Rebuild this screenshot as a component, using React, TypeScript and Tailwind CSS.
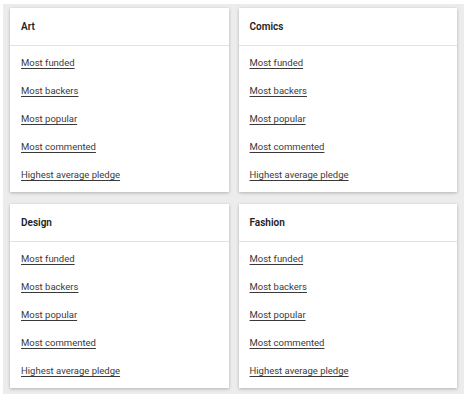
const categories = ['Art', 'Comics', 'Design', 'Fashion'];
const links = ['Most funded', 'Most backers', 'Most popular', 'Most commented', 'Highest average pledge'];

function CategoryCard({ title }: { title: string }) {
  return (
    <div className="bg-white shadow-[0_1px_3px_rgba(0,0,0,0.25)]">
      <div className="h-[38px] flex items-center px-[11px] border-b border-[#e3e3e3]">
        <h2 className="text-[10px] font-semibold text-[#222]">{title}</h2>
      </div>
      <ul className="py-[3px]">
        {links.map((l) => (
          <li key={l} className="h-7 flex items-center px-[11px]">
            <a href="#" className="text-[9.5px] text-[#3a3a3a] underline underline-offset-[2px]">
              {l}
            </a>
          </li>
        ))}
      </ul>
    </div>
  );
}

export default function App() {
  return (
    <div className="bg-white w-[470px] h-[403px] pt-[4px] pl-[3px]" style={{ fontFamily: 'Roboto, sans-serif' }}>
      <div className="bg-[#ececec] w-[461px] h-[390px] px-[7px] pt-[4px] grid grid-cols-2 gap-x-[10px] gap-y-[12px] content-start">
        {categories.map((c) => (
          <CategoryCard key={c} title={c} />
        ))}
      </div>
    </div>
  );
}
